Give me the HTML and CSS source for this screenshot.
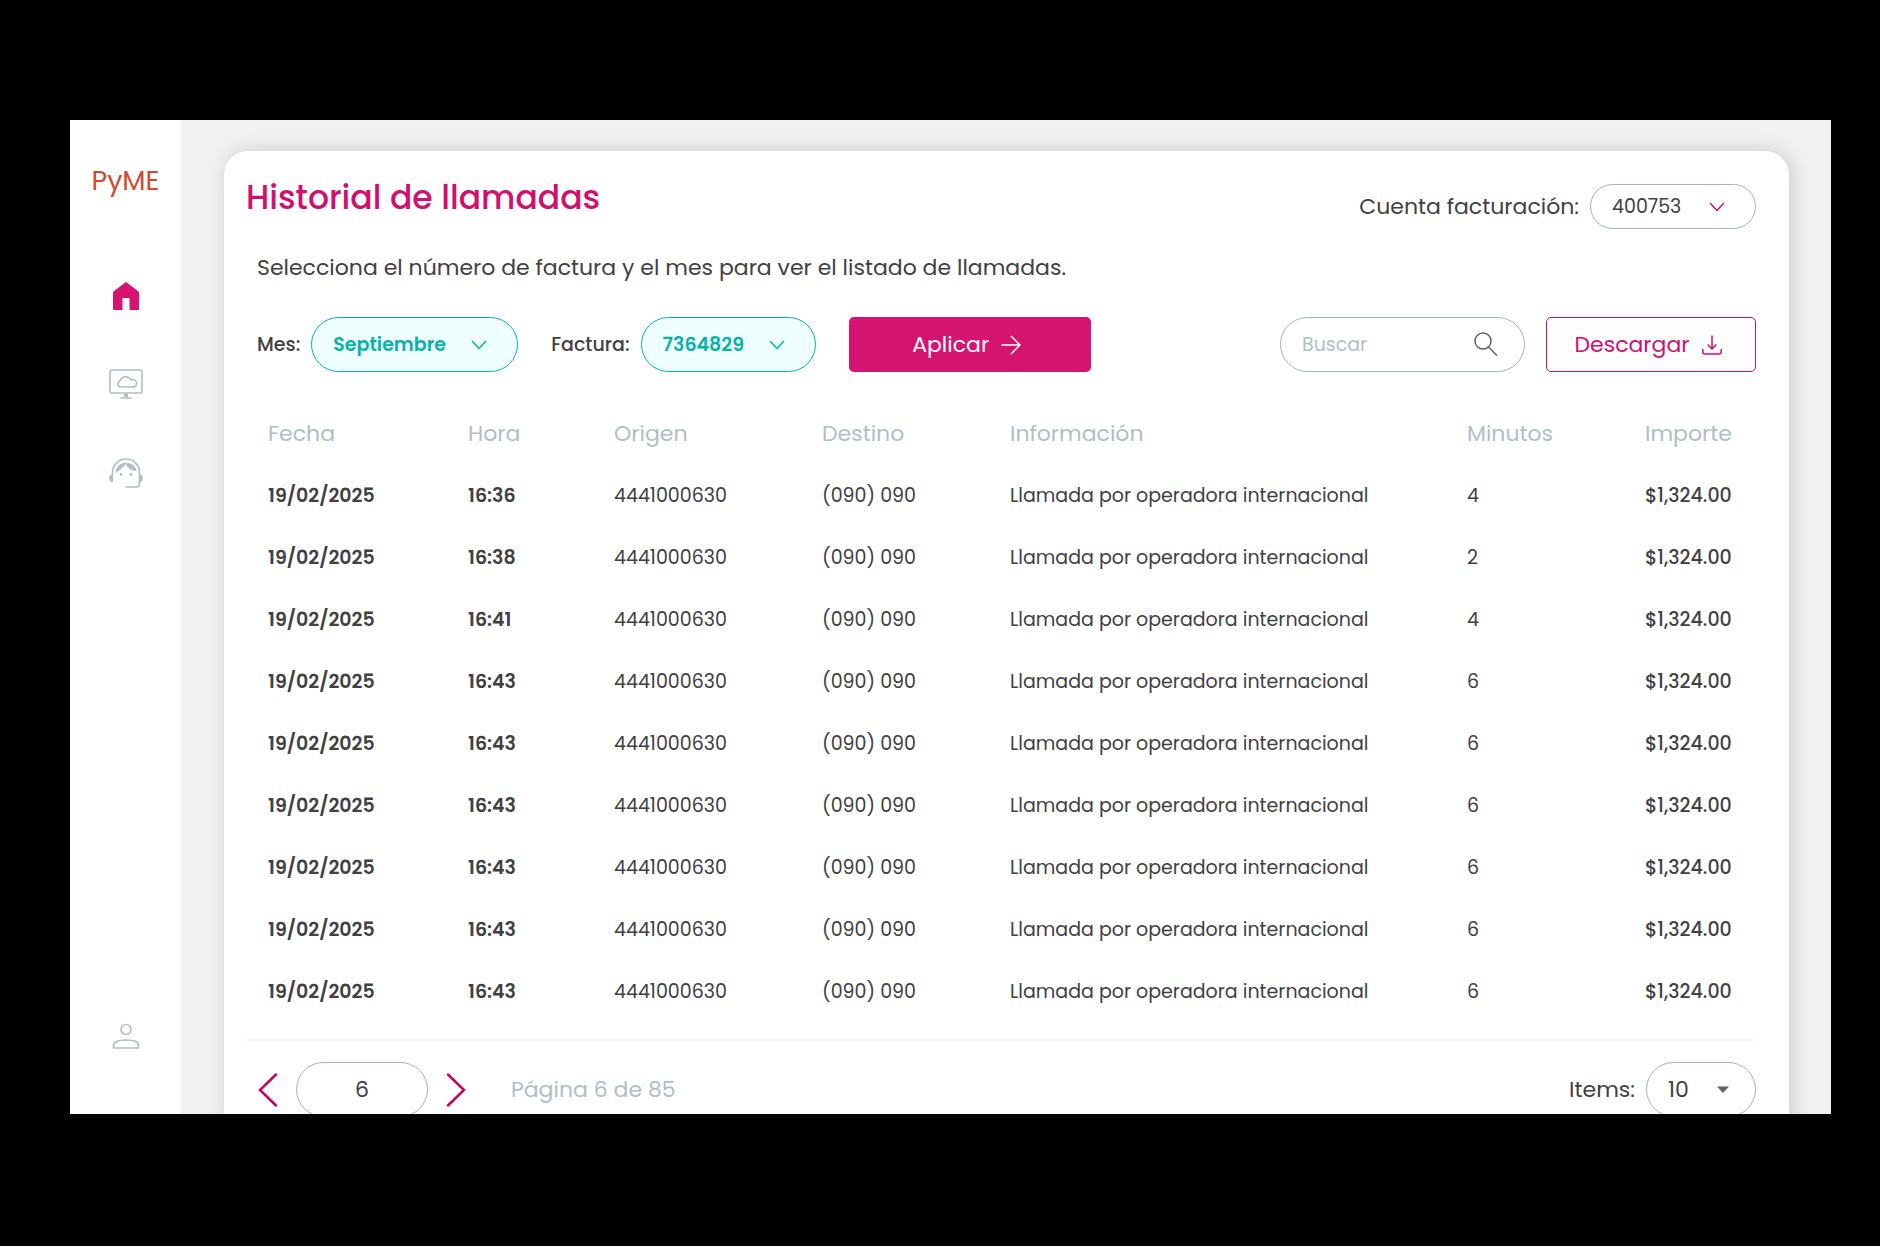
FILE: index.html
```html
<!DOCTYPE html>
<html lang="es">
<head>
    <meta charset="UTF-8">
    <meta name="viewport" content="width=device-width, initial-scale=1.0">
    <title>Historial de llamadas</title>
    <link rel="stylesheet" href="styles.css">
</head>
<body>

    <div class="app">
        <nav class="sidebar">
            <a href="#" class="logo">PyME</a>

            <a href="#" class="nav-link active" aria-label="Inicio">
                <svg width="34" height="34" viewBox="0 0 34 34"><path d="M17 2 L29 11 Q30 12 30 13 V29 Q30 30 29 30 H21 Q20.500 30 20.500 29 V18 H13.500 V29 Q13.500 30 13 30 H5 Q4 30 4 29 V13 Q4 12 5 11 Z" fill="currentColor"/></svg>
            </a>
            <a href="#" class="nav-link" aria-label="Servicios">
                <svg width="34" height="34" viewBox="0 0 34 34" fill="none" stroke="currentColor" stroke-width="1.6" stroke-linecap="round">
                    <rect x="1" y="2" width="32" height="23" rx="2"/>
                    <path d="M11 19 A3.800 3.800 0 0 1 11.300 12.200 A6 6 0 0 1 22 12 A3.800 3.800 0 1 1 23 19 Z" stroke-linejoin="round"/>
                    <path d="M17 26 V29" stroke-width="4" stroke-linecap="butt"/>
                    <path d="M12 30 H22"/>
                </svg>
            </a>
            <a href="#" class="nav-link" aria-label="Soporte">
                <svg width="34" height="34" viewBox="0 0 34 34" fill="none" stroke="currentColor" stroke-width="1.6" stroke-linecap="round">
                    <path d="M3.500 19 V16 A13.500 13 0 0 1 30.500 16 V28 Q30.500 31 27.500 31 H17"/>
                    <path d="M3.500 19 V26 Q0 26 1 20 Q2 18.500 3.500 19 M30.500 19 V26 Q34 26 33 20 Q32 18.500 30.500 19" fill="currentColor" stroke-width="1"/>
                    <path d="M7 16 C8 10 12 7 16.500 7.500 C14 11 11 14 7 16 Z M17 7.500 C22 7 26 10 27 14.500 C22 14 19 12 17 7.500 Z" fill="currentColor" stroke-width="1"/>
                    <circle cx="12" cy="18.500" r="1.400" fill="currentColor" stroke="none"/>
                    <circle cx="22" cy="18.500" r="1.400" fill="currentColor" stroke="none"/>
                </svg>
            </a>
            <a href="#" class="nav-link user" aria-label="Perfil">
                <svg width="34" height="34" viewBox="0 0 34 34" fill="none" stroke="currentColor" stroke-width="1.600">
                    <circle cx="17" cy="9.500" r="5"/>
                    <path d="M4.500 28 V25.500 C4.500 21.500 9 20 17 20 S29.500 21.500 29.500 25.500 V28 Z" stroke-linejoin="round"/>
                </svg>
            </a>
        </nav>

        <main class="content">
            <section class="card">
                <header class="card-header">
                    <h1>Historial de llamadas</h1>
                    <div class="field account">
                        <label for="cuenta">Cuenta facturación:</label>
                        <div class="select">
                            <select id="cuenta"><option>400753</option></select>
                            <svg width="16" height="10" viewBox="0 0 16 10"><path d="M1 1 L8 8.500 L15 1"/></svg>
                        </div>
                    </div>
                </header>

                <p class="intro">Selecciona el número de factura y el mes para ver el listado de llamadas.</p>

                <form class="filters">
                    <div class="field">
                        <label for="mes">Mes:</label>
                        <div class="select teal month">
                            <select id="mes"><option>Septiembre</option></select>
                            <svg width="16" height="10" viewBox="0 0 16 10"><path d="M1 1 L8 8.500 L15 1"/></svg>
                        </div>
                    </div>
                    <div class="field">
                        <label for="factura">Factura:</label>
                        <div class="select teal invoice">
                            <select id="factura"><option>7364829</option></select>
                            <svg width="16" height="10" viewBox="0 0 16 10"><path d="M1 1 L8 8.500 L15 1"/></svg>
                        </div>
                    </div>
                    <button type="button" class="btn btn-primary">
                        Aplicar
                        <svg width="20" height="20" viewBox="0 0 20 20"><path d="M0.500 10 H19 M10 1 L19 10 L10 19"/></svg>
                    </button>
                    <div class="search">
                        <input type="search" placeholder="Buscar" aria-label="Buscar">
                        <svg width="24" height="24" viewBox="0 0 24 24"><circle cx="9" cy="9" r="8"/><path d="M14.500 15 L23 23.500"/></svg>
                    </div>
                    <button type="button" class="btn btn-outline">
                        Descargar
                        <svg width="20" height="20" viewBox="0 0 20 20"><path d="M10 0.500 V14 M5.500 9.500 L10 14 L14.500 9.500 M0.800 14 V17 Q0.800 19 2.800 19 H17.200 Q19.200 19 19.200 17 V14"/></svg>
                    </button>
                </form>

                <table class="calls">
                    <colgroup>
                        <col class="col-date">
                        <col class="col-time">
                        <col class="col-from">
                        <col class="col-to">
                        <col>
                        <col class="col-min">
                        <col class="col-total">
                    </colgroup>
                    <thead>
                        <tr>
                            <th>Fecha</th>
                            <th>Hora</th>
                            <th>Origen</th>
                            <th>Destino</th>
                            <th>Información</th>
                            <th>Minutos</th>
                            <th>Importe</th>
                        </tr>
                    </thead>
                    <tbody>
                        <tr><td>19/02/2025</td><td>16:36</td><td>4441000630</td><td>(090) 090</td><td>Llamada por operadora internacional</td><td>4</td><td>$1,324.00</td></tr>
                        <tr><td>19/02/2025</td><td>16:38</td><td>4441000630</td><td>(090) 090</td><td>Llamada por operadora internacional</td><td>2</td><td>$1,324.00</td></tr>
                        <tr><td>19/02/2025</td><td>16:41</td><td>4441000630</td><td>(090) 090</td><td>Llamada por operadora internacional</td><td>4</td><td>$1,324.00</td></tr>
                        <tr><td>19/02/2025</td><td>16:43</td><td>4441000630</td><td>(090) 090</td><td>Llamada por operadora internacional</td><td>6</td><td>$1,324.00</td></tr>
                        <tr><td>19/02/2025</td><td>16:43</td><td>4441000630</td><td>(090) 090</td><td>Llamada por operadora internacional</td><td>6</td><td>$1,324.00</td></tr>
                        <tr><td>19/02/2025</td><td>16:43</td><td>4441000630</td><td>(090) 090</td><td>Llamada por operadora internacional</td><td>6</td><td>$1,324.00</td></tr>
                        <tr><td>19/02/2025</td><td>16:43</td><td>4441000630</td><td>(090) 090</td><td>Llamada por operadora internacional</td><td>6</td><td>$1,324.00</td></tr>
                        <tr><td>19/02/2025</td><td>16:43</td><td>4441000630</td><td>(090) 090</td><td>Llamada por operadora internacional</td><td>6</td><td>$1,324.00</td></tr>
                        <tr><td>19/02/2025</td><td>16:43</td><td>4441000630</td><td>(090) 090</td><td>Llamada por operadora internacional</td><td>6</td><td>$1,324.00</td></tr>
                    </tbody>
                </table>

                <footer class="pager">
                    <button type="button" class="arrow" aria-label="Anterior">
                        <svg width="20" height="34" viewBox="0 0 20 34"><path d="M18 1.500 L2 17 L18 32.500"/></svg>
                    </button>
                    <input type="text" class="page" value="6" aria-label="Página">
                    <button type="button" class="arrow" aria-label="Siguiente">
                        <svg width="20" height="34" viewBox="0 0 20 34"><path d="M2 1.500 L18 17 L2 32.500"/></svg>
                    </button>
                    <span class="page-info">Página 6 de 85</span>
                    <div class="field items">
                        <label for="items">Items:</label>
                        <div class="select">
                            <select id="items"><option>10</option></select>
                            <svg width="14" height="8" viewBox="0 0 14 8"><path d="M1 0.500 H13 L7 7 Z"/></svg>
                        </div>
                    </div>
                </footer>
            </section>
        </main>
    </div>

</body>
</html>
```
FILE: styles.css
```css
* {
    box-sizing: border-box;
}

body {
    margin: 0;
    padding: 120px 49px 132px 70px;
    height: 100vh;
    background-color: #000;
    color: #414042;
    font-family: Poppins, Inter, "Open Sans", sans-serif;
    font-size: 19px;
}

button, input, select {
    font-family: inherit;
    color: inherit;
}

svg {
    display: block;
}

.app {
    display: flex;
    height: 100%;
    overflow: hidden;
    background-color: #f1f1f1;
}

/* Sidebar */
.sidebar {
    display: flex;
    flex-direction: column;
    align-items: center;
    width: 111px;
    padding: 46px 0 60px;
    background-color: #fff;
}

.logo {
    margin-bottom: 84px;
    font-size: 27px;
    line-height: 30px;
    color: #d1492e;
    text-decoration: none;
}

.nav-link {
    margin-bottom: 54px;
    color: #b0bec5;
}

.nav-link.active {
    color: #d4146f;
}

.nav-link.user {
    margin-top: auto;
    margin-bottom: 0;
}

/* Card */
.content {
    flex: 1;
    padding: 31px 42px 0 43px;
}

.card {
    padding: 33px 33px 22px 22px;
    background-color: #fff;
    border-radius: 24px;
    box-shadow: 3px 0 20px rgba(0, 0, 0, 0.16);
}

.card-header {
    display: flex;
    justify-content: space-between;
    align-items: flex-start;
}

h1 {
    margin: 0;
    font-size: 33px;
    font-weight: 500;
    line-height: 28px;
    color: #d30f6d;
}

.intro {
    margin: 24px 11px 34px;
    font-size: 22px;
    line-height: 30px;
}

.field {
    display: flex;
    align-items: center;
    gap: 11px;
}

.select {
    position: relative;
    height: 55px;
}

.select select {
    width: 100%;
    height: 100%;
    padding: 0 21px;
    border: 1px solid #a3b4bd;
    border-radius: 28px;
    background-color: #fff;
    font-size: 19px;
    appearance: none;
}

.select svg {
    position: absolute;
    top: 50%;
    right: 31px;
    transform: translateY(-50%);
    fill: none;
    stroke: #d30f6d;
    stroke-width: 1.5;
    pointer-events: none;
}

.select.teal select {
    border-color: #0ab1ab;
    background-color: #efffff;
    color: #0ab1ab;
    font-weight: 600;
}

.select.teal svg {
    stroke: #0ab1ab;
}

.select.month {
    width: 207px;
}

.select.invoice {
    width: 175px;
}

.account label {
    font-size: 22px;
}

.account .select {
    width: 166px;
    height: 45px;
}

/* Filters */
.filters {
    display: flex;
    align-items: center;
    gap: 33px;
    padding-left: 11px;
}

.filters label {
    font-weight: 500;
}

.btn {
    display: flex;
    justify-content: center;
    align-items: center;
    gap: 12px;
    height: 55px;
    padding: 0 12px 0 6px;
    border-radius: 5px;
    font-size: 22px;
    cursor: pointer;
}

.btn svg {
    fill: none;
    stroke: currentColor;
    stroke-width: 1.5;
}

.btn-primary {
    width: 242px;
    border: none;
    background-color: #d4146f;
    color: #fff;
}

.btn-outline {
    width: 210px;
    margin-left: -12px;
    border: 1px solid #d30f6d;
    background-color: #fdfdfd;
    color: #d30f6d;
}

.search {
    position: relative;
    width: 245px;
    height: 55px;
    margin-left: auto;
}

.search input {
    width: 100%;
    height: 100%;
    padding: 0 60px 0 21px;
    border: 1px solid #a3b4bd;
    border-radius: 28px;
    background-color: #fff;
    font-size: 19px;
}

.search input::placeholder {
    color: #b0bec5;
}

.search svg {
    position: absolute;
    top: 15px;
    right: 27px;
    fill: none;
    stroke: #5f6368;
    stroke-width: 1.5;
}

/* Table */
.calls {
    width: 100%;
    margin-top: 30px;
    border-collapse: collapse;
    table-layout: fixed;
}

.calls th,
.calls td {
    height: 62px;
    padding: 0 0 0 22px;
    text-align: left;
    white-space: nowrap;
}

.calls th {
    font-size: 22px;
    font-weight: 400;
    color: #b0bec5;
}

.calls td:nth-child(1),
.calls td:nth-child(2) {
    font-weight: 600;
}

.calls td:nth-child(7) {
    font-weight: 500;
}

.col-date {
    width: 200px;
}

.col-time {
    width: 146px;
}

.col-from {
    width: 208px;
}

.col-to {
    width: 188px;
}

.col-min {
    width: 178px;
}

.col-total {
    width: 133px;
}

/* Pager */
.pager {
    display: flex;
    align-items: center;
    gap: 18px;
    margin-top: 17px;
    padding: 21px 0 0 12px;
    border-top: 2px solid #f4f5f6;
    font-size: 22px;
}

.arrow {
    padding: 0;
    border: none;
    background: none;
    cursor: pointer;
}

.arrow svg {
    fill: none;
    stroke: #c9005f;
    stroke-width: 2.5;
    stroke-linecap: round;
}

.page {
    width: 132px;
    height: 55px;
    border: 1px solid #a3b4bd;
    border-radius: 28px;
    font-size: 22px;
    text-align: center;
}

.page-info {
    margin-left: 27px;
    color: #b0bec5;
}

.items {
    margin-left: auto;
}

.items .select {
    width: 110px;
}

.items .select select {
    font-size: 22px;
}

.items .select svg {
    right: 26px;
    fill: #5f6368;
    stroke: none;
}
```
